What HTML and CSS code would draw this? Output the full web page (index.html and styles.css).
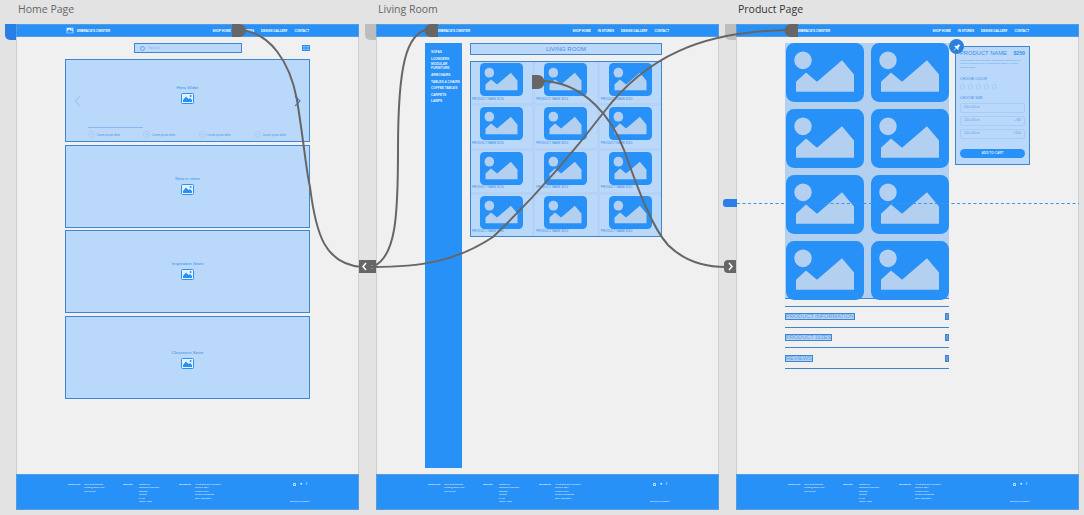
FILE: index.html
```html
<!DOCTYPE html>
<html lang="en">
<head>
    <meta charset="UTF-8">
    <meta name="viewport" content="width=device-width, initial-scale=1.0">
    <title>Wireframe Prototype</title>
    <link rel="stylesheet" href="styles.css">
</head>
<body>
    <svg class="defs" width="0" height="0">
        <symbol id="photo" viewBox="0 0 78 58" preserveAspectRatio="none">
            <rect width="78" height="58" rx="8" fill="#2891f8"/>
            <circle cx="17" cy="17" r="8.7" fill="#b3d0f1"/>
            <path d="M10 48V38L20 29L31 38L56 17L68 31V48Z" fill="#b3d0f1"/>
        </symbol>
        <symbol id="mini-photo" viewBox="0 0 13 11">
            <rect x=".5" y=".5" width="12" height="10" rx="1" fill="#e6f1fd" stroke="#2891f8"/>
            <circle cx="9.6" cy="3" r="1" fill="#2891f8"/>
            <path d="M2 9V7L5 3.5L7.5 6L9 5L11 7V9Z" fill="#2891f8"/>
        </symbol>
    </svg>

    <div class="canvas">
        <section class="board">
            <h2 class="board-title">Home Page</h2>
            <div class="frame">
                <span class="tab tab-active"></span>
                <header class="topbar">
                    <span class="brand-logo"><svg width="8" height="7"><use href="#mini-photo"/></svg></span>
                    <span class="brand">EMBRACE'S CHESTER</span>
                    <nav class="nav"><span>SHOP HOME</span><span>IN STORES</span><span>DESIGN GALLERY</span><span>CONTACT</span></nav>
                </header>
                <main class="main home">
                    <div class="toolbar">
                        <div class="search"><i class="search-dot"></i>Search</div>
                        <svg class="grid-btn" width="8" height="6" viewBox="0 0 8 6">
                            <rect width="8" height="6" fill="#2891f8"/>
                            <path d="M1 1h2.500v1.500h-2.500zM4.500 1h2.500v1.500h-2.500zM1 3.500h2.500v1.500h-2.500zM4.500 3.500h2.500v1.500h-2.500z" fill="#7fbcf8"/>
                        </svg>
                    </div>
                    <div class="block hero">
                        <svg class="arrow arrow-left" width="8" height="12" viewBox="0 0 8 12"><path d="M7 1L2 6L7 11" fill="none" stroke="#a3c6f0" stroke-width="1.2"/></svg>
                        <svg class="arrow arrow-right" width="8" height="12" viewBox="0 0 8 12"><path d="M1 1L6 6L1 11" fill="none" stroke="#3f86d2" stroke-width="1.2"/></svg>
                        <p class="block-name">Hero Slider</p>
                        <svg class="block-icon" width="13" height="11"><use href="#mini-photo"/></svg>
                        <div class="slider-line"></div>
                        <div class="steps">
                            <div class="step"><i>1</i>Lorem ipsum dolor</div>
                            <div class="step"><i>2</i>Lorem ipsum dolor</div>
                            <div class="step"><i>3</i>Lorem ipsum dolor</div>
                            <div class="step"><i>4</i>Lorem ipsum dolor</div>
                        </div>
                    </div>
                    <div class="block"><p class="block-name">New in store</p><svg class="block-icon" width="13" height="11"><use href="#mini-photo"/></svg></div>
                    <div class="block"><p class="block-name">Inspiration Store</p><svg class="block-icon" width="13" height="11"><use href="#mini-photo"/></svg></div>
                    <div class="block"><p class="block-name">Clearance Store</p><svg class="block-icon" width="13" height="11"><use href="#mini-photo"/></svg></div>
                </main>
                <footer class="footer"></footer>
            </div>
        </section>

        <section class="board">
            <h2 class="board-title">Living Room</h2>
            <div class="frame">
                <span class="tab"></span>
                <header class="topbar">
                    <span class="brand-logo"><svg width="8" height="7"><use href="#mini-photo"/></svg></span>
                    <span class="brand">EMBRACE'S CHESTER</span>
                    <nav class="nav"><span>SHOP HOME</span><span>IN STORES</span><span>DESIGN GALLERY</span><span>CONTACT</span></nav>
                </header>
                <main class="main living">
                    <aside class="sidebar">
                        <span>SOFAS</span>
                        <span>LOUNGERS</span>
                        <span class="two-line">MODULAR<br>FURNITURE</span>
                        <span>ARMCHAIRS</span>
                        <span>TABLES &amp; CHAIRS</span>
                        <span>COFFEE TABLES</span>
                        <span>CARPETS</span>
                        <span>LAMPS</span>
                    </aside>
                    <div class="listing">
                        <h3 class="listing-title">LIVING ROOM</h3>
                        <div class="products">
                            <div class="product"><svg class="product-img"><use href="#photo"/></svg><p>PRODUCT NAME $250</p></div>
                            <div class="product"><svg class="product-img"><use href="#photo"/></svg><p>PRODUCT NAME $250</p></div>
                            <div class="product"><svg class="product-img"><use href="#photo"/></svg><p>PRODUCT NAME $250</p></div>
                            <div class="product"><svg class="product-img"><use href="#photo"/></svg><p>PRODUCT NAME $250</p></div>
                            <div class="product"><svg class="product-img"><use href="#photo"/></svg><p>PRODUCT NAME $250</p></div>
                            <div class="product"><svg class="product-img"><use href="#photo"/></svg><p>PRODUCT NAME $250</p></div>
                            <div class="product"><svg class="product-img"><use href="#photo"/></svg><p>PRODUCT NAME $250</p></div>
                            <div class="product"><svg class="product-img"><use href="#photo"/></svg><p>PRODUCT NAME $250</p></div>
                            <div class="product"><svg class="product-img"><use href="#photo"/></svg><p>PRODUCT NAME $250</p></div>
                            <div class="product"><svg class="product-img"><use href="#photo"/></svg><p>PRODUCT NAME $250</p></div>
                            <div class="product"><svg class="product-img"><use href="#photo"/></svg><p>PRODUCT NAME $250</p></div>
                            <div class="product"><svg class="product-img"><use href="#photo"/></svg><p>PRODUCT NAME $250</p></div>
                        </div>
                    </div>
                </main>
                <footer class="footer"></footer>
            </div>
        </section>

        <section class="board">
            <h2 class="board-title board-title-active">Product Page</h2>
            <div class="frame">
                <span class="tab"></span>
                <header class="topbar">
                    <span class="brand-logo"><svg width="8" height="7"><use href="#mini-photo"/></svg></span>
                    <span class="brand">EMBRACE'S CHESTER</span>
                    <nav class="nav"><span>SHOP HOME</span><span>IN STORES</span><span>DESIGN GALLERY</span><span>CONTACT</span></nav>
                </header>
                <main class="main detail">
                    <div class="detail-left">
                        <div class="gallery">
                            <svg><use href="#photo"/></svg><svg><use href="#photo"/></svg>
                            <svg><use href="#photo"/></svg><svg><use href="#photo"/></svg>
                            <svg><use href="#photo"/></svg><svg><use href="#photo"/></svg>
                            <svg><use href="#photo"/></svg><svg><use href="#photo"/></svg>
                        </div>
                        <div class="accordion">
                            <div class="acc-row"><span class="acc-label">PRODUCT INFORMATION</span><span class="acc-toggle">(</span></div>
                            <div class="acc-row"><span class="acc-label">PRODUCT SIZES</span><span class="acc-toggle">(</span></div>
                            <div class="acc-row"><span class="acc-label">REVIEWS</span><span class="acc-toggle">(</span></div>
                        </div>
                    </div>
                    <div class="panel">
                        <span class="pin">
                            <svg width="8" height="8" viewBox="0 0 24 24"><path d="M16 2l6 6-2 1-4 5 1 5-2 2-5-5-7 7-1-1 7-7-5-5 2-2 5 1 5-4z" fill="#fff"/></svg>
                        </span>
                        <div class="panel-head"><span class="panel-name">PRODUCT NAME</span><span class="panel-price">$250</span></div>
                        <p class="panel-text">Lorem ipsum dolor sit amet, consectetur adipiscing elit, sed do eiusmod tempor incididunt ut labore et dolore magna aliqua.</p>
                        <p class="panel-label">CHOOSE COLOR</p>
                        <div class="swatches"><i></i><i></i><i></i><i></i><i></i></div>
                        <p class="panel-label">CHOOSE SIZE</p>
                        <div class="size"><span>100 x 200 cm</span></div>
                        <div class="size"><span>120 x 200 cm</span><span>+ $50</span></div>
                        <div class="size"><span>140 x 200 cm</span><span>+ $100</span></div>
                        <div class="add-btn">ADD TO CART</div>
                    </div>
                </main>
                <footer class="footer"></footer>
            </div>
        </section>

        <svg class="wires" width="1084" height="515" viewBox="0 0 1084 515">
            <path class="handle-blue" d="M726 199H737V207H726Q723 207 723 204V202Q723 199 726 199Z"/>
            <line class="breakpoint" x1="737" y1="203.5" x2="1079" y2="203.5"/>

            <path class="wire" d="M240 30C270 32 290 62 297 100C305 150 306 170 310 187C316 235 325 264 362 267"/>
            <path class="wire" d="M430 29C405 31 398 70 398 150C398 215 396 256 374 266"/>
            <path class="wire" d="M790 30C700 31 645 58 604 112C575 150 535 197 493 237C455 262 420 267 372 267"/>
            <path class="wire" d="M540 81C585 81 613 120 624 150C635 180 650 225 668 245C685 262 705 267 726 267"/>

            <path class="port" d="M232 24H239A7 6.5 0 0 1 239 37H232Z"/>
            <path class="port" d="M431 24H438V37H431A6.5 6.5 0 0 1 431 24Z"/>
            <path class="port" d="M791 24H798V37H791A6.5 6.5 0 0 1 791 24Z"/>
            <path class="port" d="M532 75H538A6.5 7 0 0 1 538 89H532Z"/>

            <rect class="port" x="359" y="260" width="17" height="13"/>
            <path d="M366 263L363 266.5L366 270" class="chevron"/>
            <path class="dots" d="M372 265V265.8M372 268V268.8"/>
            <path class="port" d="M736 260V273H728Q724 273 724 269V264Q724 260 728 260Z"/>
            <path d="M729 263L732 266.5L729 270" class="chevron"/>
        </svg>
    </div>

    <template id="footer-tpl">
        <div class="foot-col">
            <b>INSPIRATION</b>
            <div><p>OUR SHOWROOM</p><p>contact@gallery.com</p><p class="gap">Get a Quote</p></div>
        </div>
        <div class="foot-col">
            <b>SERVICES</b>
            <div><p>Contact Us</p><p>Ordering &amp; Payment</p><p class="gap">Shipping</p><p>Returns</p><p class="gap">FAQs</p><p>Gallery Links</p></div>
        </div>
        <div class="foot-col">
            <b>RESOURCES</b>
            <div><p>About Embrace's Furniture</p><p>Terms &amp; Offer</p><p class="gap">Privacy Policy</p><p>Terms &amp; Conditions</p><p class="gap">Store Inspiration</p></div>
        </div>
        <div class="foot-end">
            <div class="socials"><i></i><span>♥</span><span>f</span></div>
            <p>Embrace's Furniture</p>
        </div>
    </template>

    <script>
        // all three pages share the same footer
        var tpl = document.getElementById('footer-tpl');
        document.querySelectorAll('.footer').forEach(function (f) {
            f.appendChild(tpl.content.cloneNode(true));
        });
    </script>
</body>
</html>
```

FILE: styles.css
```css
:root {
    --blue: #2891f8;
    --line: #3f86d2;
    --fill: #bad8fa;
    --tile: #b3d0f1;
    --page: #f0f0f0;
    --wire: #666;
}

* {
    box-sizing: border-box;
    margin: 0;
    padding: 0;
}

body {
    width: 1084px;
    height: 515px;
    overflow: hidden;
    background: #e3e3e3;
    font-family: "Liberation Sans", Arial, sans-serif;
}

.defs {
    position: absolute;
}

.canvas {
    position: relative;
    display: flex;
    gap: 17px;
    width: 1084px;
    height: 515px;
    padding-left: 16px;
}

.board {
    width: 343px;
}

.board-title {
    height: 24px;
    padding: 2px 0 0 2px;
    font: 400 10.5px/14px "Open Sans", sans-serif;
    color: #666;
}

.board-title-active {
    color: #333;
}

.frame {
    position: relative;
    display: flex;
    flex-direction: column;
    height: 486px;
}

.tab {
    position: absolute;
    left: -11px;
    top: 0;
    width: 11px;
    height: 16px;
    border-radius: 0 0 0 5px;
    background: #bdbdbd;
}

.tab-active {
    background: #2a7fe6;
}

/* header */
.topbar {
    display: flex;
    align-items: center;
    height: 13px;
    padding-left: 49px;
    background: var(--blue);
    border: 1px solid #5a9bdc;
    color: #fff;
    font-size: 3px;
    font-weight: 700;
}

.brand-logo {
    display: flex;
    width: 8px;
    margin-right: 3px;
}

.nav {
    display: flex;
    gap: 7px;
    margin-left: auto;
    margin-right: 49px;
}

/* main area */
.main {
    flex: 1;
    padding: 6px 48px 0;
    background: var(--page);
    border-left: 1px solid #cfcfcf;
    border-right: 1px solid #cfcfcf;
    min-height: 0;
}

.home {
    display: flex;
    flex-direction: column;
    gap: 2.5px;
}

.toolbar {
    display: grid;
    grid-template-columns: 1fr 108px 1fr;
    align-items: center;
    height: 10px;
    margin-bottom: 3.5px;
}

.search {
    grid-column: 2;
    display: flex;
    align-items: center;
    height: 10px;
    padding-left: 5px;
    gap: 4px;
    background: var(--fill);
    border: 1px solid var(--line);
    font-size: 3.5px;
    color: #7db4f0;
}

.search-dot {
    width: 5px;
    height: 5px;
    border: 1px solid #6aa7e8;
    border-radius: 50%;
}

.grid-btn {
    grid-column: 3;
    justify-self: end;
}

.block {
    position: relative;
    display: flex;
    flex-direction: column;
    align-items: center;
    justify-content: center;
    flex: 0 0 83px;
    padding-bottom: 2px;
    background: var(--fill);
    border: 1px solid var(--line);
}

.block:last-child {
    padding: 5px 0 0;
}

.block-name {
    margin-bottom: 3px;
    font-size: 4.4px;
    line-height: 5px;
    color: #3d8fe4;
}

.hero {
    justify-content: flex-start;
    padding: 25px 0 0;
}

.arrow {
    position: absolute;
    top: 35px;
}

.arrow-left {
    left: 7px;
}

.arrow-right {
    right: 7px;
}

.slider-line {
    align-self: flex-start;
    width: 55px;
    height: 1px;
    margin: 23px 0 0 22px;
    background: #8db8ea;
}

.steps {
    display: flex;
    align-self: stretch;
    padding-left: 22px;
    margin-top: 3px;
}

.step {
    display: flex;
    align-items: center;
    gap: 2px;
    width: 55.5px;
    font-size: 2.8px;
    color: #4c94de;
}

.step i {
    display: flex;
    align-items: center;
    justify-content: center;
    width: 7px;
    height: 7px;
    border: 1px solid #a8ccf3;
    border-radius: 50%;
    font-style: normal;
    font-size: 2.5px;
}

/* category page */
.living {
    display: flex;
    gap: 8px;
}

.sidebar {
    display: flex;
    flex-direction: column;
    width: 37px;
    height: 425px;
    padding: 6px 0 0 6px;
    background: var(--blue);
    color: #e8f3ff;
    font-size: 3.2px;
    font-weight: 700;
    line-height: 6.5px;
}

.two-line {
    line-height: 3.5px;
    padding: 1px 0;
    margin-bottom: 1px;
}

.listing {
    width: 192px;
}

.listing-title {
    height: 12px;
    margin-bottom: 6px;
    background: var(--fill);
    border: 1px solid var(--line);
    font-size: 6px;
    font-weight: 400;
    line-height: 10px;
    text-align: center;
    color: #3d8fe4;
}

.products {
    display: grid;
    grid-template-columns: repeat(3, 1fr);
    grid-template-rows: repeat(4, 1fr);
    gap: 3px;
    height: 176px;
    background: #b3d2f5;
    border: 1px solid var(--line);
}

.product {
    display: flex;
    flex-direction: column;
    align-items: center;
    background: var(--fill);
    padding-top: 1px;
}

.product-img {
    width: 43px;
    height: 33px;
}

.product p {
    align-self: flex-start;
    margin-top: 1.5px;
    padding-left: 1px;
    font-size: 3px;
    line-height: 3.5px;
    white-space: nowrap;
    color: #3d8fe4;
}

/* product page */
.detail {
    display: flex;
    align-items: flex-start;
    gap: 6px;
}

.detail-left {
    width: 164px;
}

.gallery {
    display: grid;
    grid-template-columns: 78px 78px;
    grid-auto-rows: 59px;
    justify-content: space-between;
    gap: 7px;
    height: 256px;
    padding: 0 .5px;
    background: var(--tile);
    border-bottom: 1px solid var(--line);
}

.gallery svg {
    width: 78px;
    height: 59px;
}

.accordion {
    margin-top: 7px;
    border-bottom: 1px solid var(--line);
}

.acc-row {
    display: flex;
    align-items: center;
    justify-content: space-between;
    height: 20.7px;
    border-top: 1px solid var(--line);
}

.acc-label {
    height: 7px;
    background: #b3d2f5;
    border: 1px solid var(--line);
    font-size: 5.6px;
    line-height: 5px;
    color: #5c9fe6;
    white-space: nowrap;
}

.acc-toggle {
    width: 4px;
    height: 7px;
    background: var(--line);
    color: #cfe4fb;
    font-size: 5px;
    line-height: 7px;
    text-align: center;
}

.panel {
    position: relative;
    width: 76px;
    height: 119px;
    margin-top: 3px;
    padding: 3px 4px 0;
    background: var(--fill);
    border: 1px solid var(--line);
}

.pin {
    position: absolute;
    left: -7px;
    top: -8px;
    display: flex;
    align-items: center;
    justify-content: center;
    width: 15px;
    height: 15px;
    border-radius: 50%;
    background: #2a80dc;
}

.panel-head {
    display: flex;
    justify-content: space-between;
    align-items: baseline;
    white-space: nowrap;
    color: #3d8fe4;
}

.panel-name {
    font-size: 5.8px;
}

.panel-price {
    font-size: 5.2px;
    font-weight: 700;
}

.panel-text {
    margin-top: 3px;
    margin-bottom: 8px;
    font-size: 2.5px;
    line-height: 3.4px;
    color: #5a9ee6;
}

.panel-label {
    font-size: 3.3px;
    line-height: 5px;
    color: #3d8fe4;
}

.swatches {
    display: flex;
    gap: 3.5px;
    margin-top: 2px;
    margin-bottom: 7px;
}

.swatches i {
    width: 4.5px;
    height: 4.5px;
    border: 1px solid #a8ccf3;
    border-radius: 50%;
}

.size {
    display: flex;
    align-items: center;
    justify-content: space-between;
    height: 10px;
    margin-top: 3px;
    padding: 0 3px;
    border: 1px solid #a8ccf3;
    border-radius: 2px;
    font-size: 2.6px;
    color: #5a9ee6;
}

.panel-label + .size {
    margin-top: 2px;
}

.add-btn {
    height: 9px;
    margin-top: 10px;
    border-radius: 5px;
    background: var(--blue);
    color: #d8eaff;
    font-size: 3.2px;
    font-weight: 700;
    line-height: 9px;
    text-align: center;
}

/* footer */
.footer {
    display: grid;
    grid-template-columns: 55px 56px 111px 1fr;
    height: 36px;
    padding: 8px 0 0 51px;
    background: var(--blue);
    border: 1px solid #5a9bdc;
    color: #fff;
    font-size: 2.2px;
    line-height: 3px;
}

.foot-col {
    display: flex;
}

.foot-col b {
    flex: 0 0 16px;
    font-size: 1.9px;
    font-weight: 700;
    white-space: nowrap;
}

.foot-col p {
    white-space: nowrap;
}

.foot-col .gap {
    margin-top: 1.2px;
}

.foot-end {
    display: flex;
    flex-direction: column;
    justify-content: space-between;
    height: 20px;
    white-space: nowrap;
}

.socials {
    display: flex;
    align-items: center;
    gap: 4px;
    padding-left: 3px;
    font-size: 3.5px;
}

.socials i {
    width: 3px;
    height: 3px;
    border: .5px solid #bcdcff;
}

/* prototype links drawn over the pages */
.wires {
    position: absolute;
    left: 0;
    top: 0;
    pointer-events: none;
}

.wire {
    fill: none;
    stroke: var(--wire);
    stroke-width: 2;
}

.port {
    fill: var(--wire);
}

.chevron {
    fill: none;
    stroke: #fff;
    stroke-width: 1.5;
}

.dots {
    fill: none;
    stroke: #ddd;
    stroke-width: .8;
}

.handle-blue {
    fill: #2a80e6;
}

.breakpoint {
    stroke: #3f94ee;
    stroke-width: 1;
    stroke-dasharray: 3 2.5;
}
```
